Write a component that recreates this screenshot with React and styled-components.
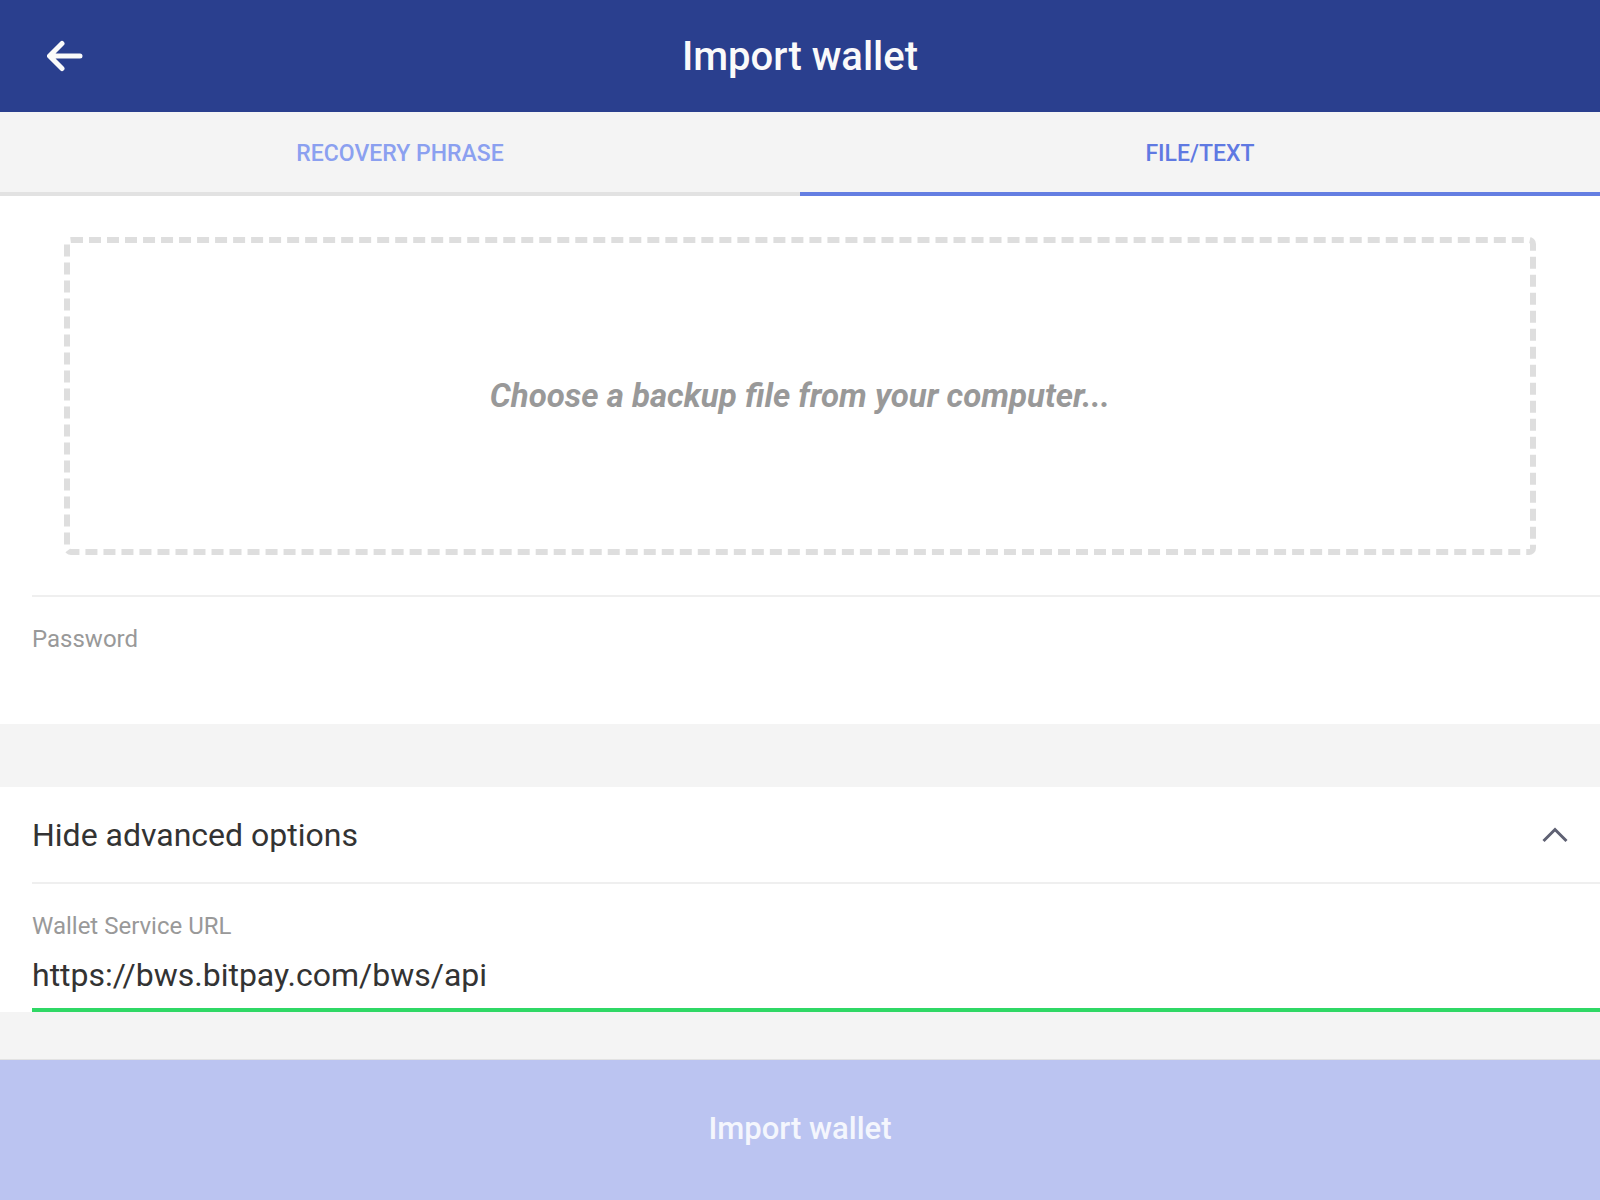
import styled, { createGlobalStyle } from 'styled-components'

const GlobalStyle = createGlobalStyle`
    html, body {
        margin: 0;
        padding: 0;
        background: #f4f4f4;
        font-family: Roboto, "Noto Sans", Arial, sans-serif;
    }
    * { box-sizing: border-box; }
`

const Page = styled.div`
    width: 1600px;
    height: 1200px;
    display: flex;
    flex-direction: column;
    background: #f4f4f4;
    overflow: hidden;
`
const Header = styled.header`
    height: 112px;
    background: #2a3f8e;
    display: grid;
    grid-template-columns: 1fr auto 1fr;
    align-items: center;
    padding: 0 47px;
`
const BackButton = styled.button`
    justify-self: start;
    width: 36px;
    height: 36px;
    padding: 0;
    border: none;
    background: transparent;
    display: flex;
    align-items: center;
    cursor: pointer;
`
const Title = styled.h1`
    margin: 0;
    font-size: 40px;
    font-weight: 500;
    color: #fafafa;
`
const Tabs = styled.nav`
    display: flex;
    background: #f4f4f4;
`
const Tab = styled.div`
    flex: 1;
    height: 84px;
    display: flex;
    align-items: center;
    justify-content: center;
    padding-top: 2px;
    font-size: 23px;
    font-weight: 500;
    text-transform: uppercase;
    color: ${props => props.active ? '#5f79e2' : '#8ba0f0'};
    border-bottom: 4px solid ${props => props.active ? '#647ee2' : '#e2e2e2'};
`
const Content = styled.main`
    background: #fff;
    padding-top: 41px;
`
const DropZone = styled.div`
    margin: 0 64px 40px;
    height: 318px;
    border: 6px dashed #dedede;
    border-radius: 7px;
    display: flex;
    align-items: center;
    justify-content: center;
    font-size: 33px;
    font-weight: 700;
    font-style: italic;
    color: #999;
    padding-bottom: 2px;
`
const Item = styled.div`
    margin-left: 32px;
    border-top: 2px solid #efefef;
    padding-top: 28px;
    height: ${props => props.h}px;
`
const Label = styled.div`
    font-size: 24px;
    line-height: 28px;
    color: #999;
`
const Input = styled.input`
    display: block;
    width: 100%;
    margin-top: 11px;
    height: 48px;
    border: none;
    outline: none;
    padding: 0;
    background: transparent;
    font-family: inherit;
    font-size: 32px;
    color: #333;
`
const Spacer = styled.div`
    height: ${props => props.h}px;
    background: #f4f4f4;
`
const Section = styled.div`
    background: #fff;
`
const ToggleRow = styled.div`
    height: 97px;
    margin-left: 32px;
    padding-right: 32px;
    border-bottom: 2px solid #efefef;
    display: flex;
    align-items: center;
    justify-content: space-between;
    font-size: 32px;
    color: #333;
`
const UrlItem = styled.div`
    margin-left: 32px;
    padding-top: 28px;
    height: 128px;
    border-bottom: 4px solid #2fd865;
`
const SubmitButton = styled.button`
    flex: 1;
    border: none;
    border-top: 1px solid #e2e2e2;
    background: #bbc4f1;
    color: #f4f6fd;
    font-family: inherit;
    font-size: 31px;
    font-weight: 500;
    padding-bottom: 4px;
    cursor: pointer;
`

const App = () => {
    return (
        <Page>
            <GlobalStyle />
            <Header>
                <BackButton aria-label="Back">
                    <svg width="36" height="36" viewBox="0 0 36 36">
                        <path d="M33 16 H4 M15 3.5 L2.5 16 L15 28.5" fill="none" stroke="#fafafa" strokeWidth="5" strokeLinecap="round" strokeLinejoin="round" transform="translate(0 2)" />
                    </svg>
                </BackButton>
                <Title>Import wallet</Title>
                <div />
            </Header>
            <Tabs>
                <Tab>Recovery phrase</Tab>
                <Tab active>File/Text</Tab>
            </Tabs>
            <Content>
                <DropZone>Choose a backup file from your computer...</DropZone>
                <Item h={129}>
                    <Label>Password</Label>
                    <Input type="password" />
                </Item>
            </Content>
            <Spacer h={63} />
            <Section>
                <ToggleRow>
                    <span>Hide advanced options</span>
                    <svg width="26" height="16" viewBox="0 0 26 16">
                        <polyline points="1.5,14 13,2.5 24.5,14" fill="none" stroke="#5f6173" strokeWidth="3" />
                    </svg>
                </ToggleRow>
                <UrlItem>
                    <Label>Wallet Service URL</Label>
                    <Input defaultValue="https://bws.bitpay.com/bws/api" />
                </UrlItem>
            </Section>
            <Spacer h={47} />
            <SubmitButton>Import wallet</SubmitButton>
        </Page>
    )
}

export default App
